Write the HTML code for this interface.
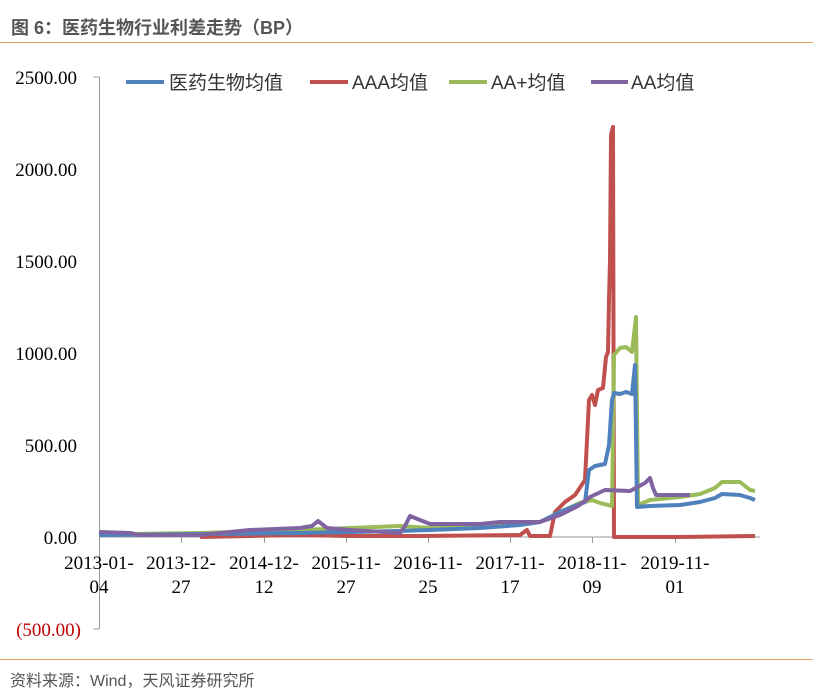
<!DOCTYPE html>
<html><head><meta charset="utf-8"><style>
body{margin:0;background:#fff;width:813px;height:692px;overflow:hidden;position:relative;font-family:"Liberation Sans","Noto Sans CJK SC",sans-serif}
.t{position:absolute;left:11px;top:14px;font-size:18px;font-weight:bold;color:#555}
.l{position:absolute;left:0;width:813px;height:1px;background:#e0a060}
.s{position:absolute;left:10px;top:667px;font-size:16px;color:#555}
</style></head><body>
<div class="t">图 6：医药生物行业利差走势（BP）</div>
<div class="l" style="top:42px"></div>
<div class="l" style="top:659px"></div>
<div class="s">资料来源：Wind，天风证券研究所</div>
<svg width="813" height="692" style="position:absolute;left:0;top:0" font-family="Liberation Serif, serif">
<g font-size="19" text-anchor="end" fill="#000">
<text x="77" y="84">2500.00</text><text x="77" y="176">2000.00</text><text x="77" y="268">1500.00</text>
<text x="77" y="360">1000.00</text><text x="77" y="452">500.00</text><text x="77" y="544">0.00</text>
<text x="81" y="636" fill="#c00000">(500.00)</text></g>
<g stroke="#999" stroke-width="1" fill="none">
<path d="M99.5 77V629M93 77H99M93 629H99M99 537H760"/>
<path d="M99.5 537v6M181.5 537v6M264.5 537v6M346.5 537v6M428.5 537v6M510.5 537v6M592.5 537v6M675.5 537v6"/></g>
<g font-size="19" text-anchor="middle" fill="#000">
<text x="99" y="569">2013-01-</text><text x="99" y="593">04</text>
<text x="181" y="569">2013-12-</text><text x="181" y="593">27</text>
<text x="264" y="569">2014-12-</text><text x="264" y="593">12</text>
<text x="346" y="569">2015-11-</text><text x="346" y="593">27</text>
<text x="428" y="569">2016-11-</text><text x="428" y="593">25</text>
<text x="510" y="569">2017-11-</text><text x="510" y="593">17</text>
<text x="592" y="569">2018-11-</text><text x="592" y="593">09</text>
<text x="675" y="569">2019-11-</text><text x="675" y="593">01</text></g>
<g fill="none" stroke-width="4" stroke-linejoin="round">
<polyline stroke="#c0504d" points="200,537 300,535 350,536 420,536 520,535 527,530 530,536 550,536 555,512 565,502 575,495 585,480 589,400 592,395 595,405 598,390 603,388 606,357 608,352 609,300 610,260 611,135 613,127 614,537 680,537 755,536"/>
<polyline stroke="#9bbb59" points="99,535 130,534 200,533 300,530 350,528 400,526 430,528 480,525 520,524 540,522 560,512 580,503 592,500 600,503 612,506 614,355 620,348 626,347 632,352 636,317 638,505 650,500 680,497 700,494 715,488 722,482 740,482 750,490 755,491"/>
<polyline stroke="#4f81bd" points="99,535 200,534 300,533 400,531 430,530 480,528 520,525 540,522 560,512 585,502 589,470 595,466 605,464 609,445 612,400 614,393 620,394 626,392 632,394 635,365 637,507 650,506 680,505 700,502 715,498 722,494 740,495 750,498 755,500"/>
<polyline stroke="#8064a2" points="99,532 130,533 140,535 200,535 250,530 300,528 312,526 318,521 327,528 350,530 400,533 405,526 410,516 420,520 430,524 480,524 500,522 520,522 540,522 560,515 578,506 590,497 605,490 630,491 645,483 650,478 653,488 656,495 690,495"/>
</g>
<g stroke-width="4">
<line x1="126" y1="82" x2="164" y2="82" stroke="#4f81bd"/>
<line x1="310" y1="82" x2="348" y2="82" stroke="#c0504d"/>
<line x1="449" y1="82" x2="487" y2="82" stroke="#9bbb59"/>
<line x1="591" y1="82" x2="628" y2="82" stroke="#8064a2"/></g>
<g font-family="Liberation Sans, Noto Sans CJK SC, sans-serif" font-size="19" fill="#333">
<text x="169" y="89">医药生物均值</text><text x="352" y="89">AAA均值</text>
<text x="491" y="89">AA+均值</text><text x="631" y="89">AA均值</text></g>
</svg>
</body></html>
